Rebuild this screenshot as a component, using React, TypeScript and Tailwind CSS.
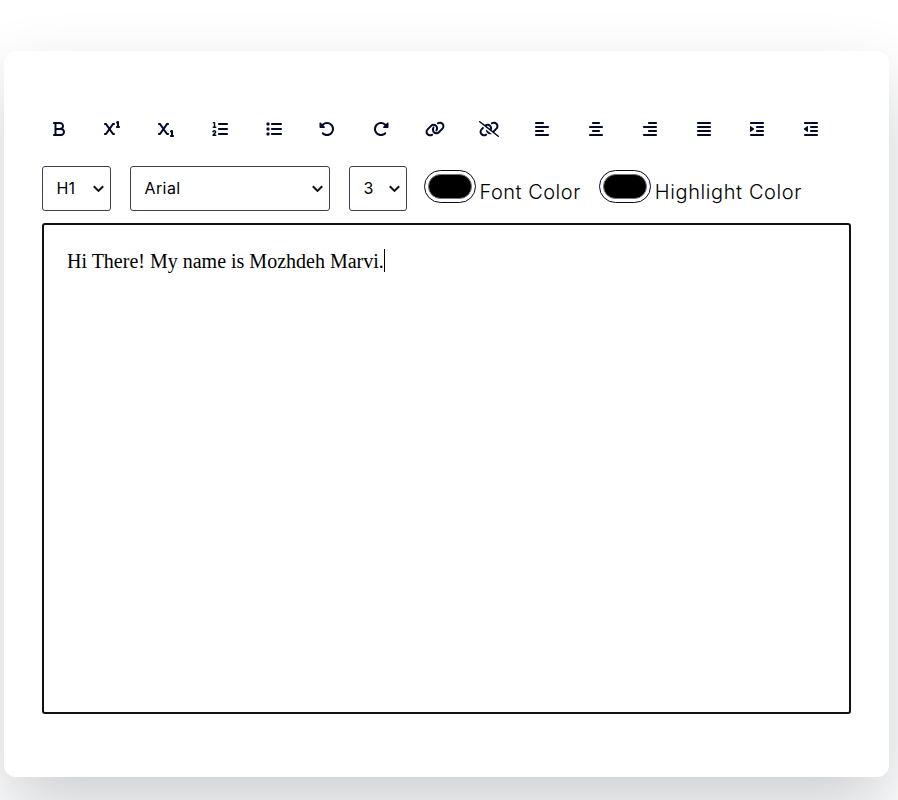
import React from "react";
import {
  FaBold, FaSuperscript, FaSubscript, FaListOl, FaList, FaRotateLeft, FaRotateRight,
  FaLink, FaLinkSlash, FaAlignLeft, FaAlignCenter, FaAlignRight, FaAlignJustify, FaIndent, FaOutdent,
} from "react-icons/fa6";

const tools = [
  { name: "Bold", Icon: FaBold },
  { name: "Superscript", Icon: FaSuperscript },
  { name: "Subscript", Icon: FaSubscript },
  { name: "Ordered list", Icon: FaListOl },
  { name: "Unordered list", Icon: FaList },
  { name: "Undo", Icon: FaRotateLeft },
  { name: "Redo", Icon: FaRotateRight },
  { name: "Link", Icon: FaLink, wide: true },
  { name: "Unlink", Icon: FaLinkSlash, wide: true },
  { name: "Align left", Icon: FaAlignLeft },
  { name: "Align center", Icon: FaAlignCenter },
  { name: "Align right", Icon: FaAlignRight },
  { name: "Justify", Icon: FaAlignJustify },
  { name: "Indent", Icon: FaIndent },
  { name: "Outdent", Icon: FaOutdent },
];

function Select({ value, className }: { value: string; className: string }) {
  return (
    <button className={`flex h-[45px] items-center justify-between rounded-[3px] border border-[#3a3f5a] pb-px pl-3.5 pr-1.5 text-base text-black ${className}`}>
      <span className="leading-6">{value}</span>
      <svg className="mt-0.5" width="11" height="8" viewBox="0 0 11 8" fill="none" stroke="#101010" strokeWidth="2">
        <path d="M0.8 1.2 L5.5 5.9 L10.2 1.2" />
      </svg>
    </button>
  );
}

function Swatch({ label, tracking }: { label: string; tracking: string }) {
  return (
    <div className="flex items-start">
      <div className="mt-1 h-[33px] w-[52px] rounded-full border border-[#020929] p-[3px]">
        <div className="h-full w-full rounded-full border border-[#777777] bg-black" />
      </div>
      <label className={`ml-1 mt-[11px] text-[20px] font-[350] leading-[30px] text-black ${tracking}`}>{label}</label>
    </div>
  );
}

export default function App() {
  return (
    <div className="h-[800px] w-full overflow-hidden bg-white pl-1 pt-[51px] font-['Inter',sans-serif]">
      <main className="h-[726px] w-[885px] rounded-[12px] bg-white pl-[37.5px] pt-[60px] shadow-[0_31px_70px_rgba(7,20,35,0.2)]">
        <div className="-ml-[0.8px] flex gap-[17.75px] text-[#020929]">
          {tools.map(({ name, Icon, wide }) => (
            <button key={name} aria-label={name} className="flex h-[35px] w-9 shrink-0 items-center justify-center">
              <Icon className={wide ? "h-4 w-5" : "h-4 w-4"} />
            </button>
          ))}
        </div>
        <div className="mt-5 flex h-[57px] items-start">
          <Select value="H1" className="w-[69px]" />
          <Select value="Arial" className="ml-[19px] w-[200px] tracking-[0.4px]" />
          <Select value="3" className="ml-[19px] mr-[17px] w-[58px]" />
          <Swatch label="Font Color" tracking="tracking-[0.5px]" />
          <div className="w-[18px] shrink-0" />
          <Swatch label="Highlight Color" tracking="tracking-[0.6px]" />
        </div>
        <div className="h-[491px] w-[809px] rounded-[3px] border-2 border-[#111111] px-[23.5px] pt-6 font-['Liberation_Serif',serif] text-[20px] leading-6 text-black">
          <p className="flex">
            <span>Hi There! My name is Mozhdeh Marvi.</span>
            <span className="h-[23px] w-px bg-black" />
          </p>
        </div>
      </main>
    </div>
  );
}
